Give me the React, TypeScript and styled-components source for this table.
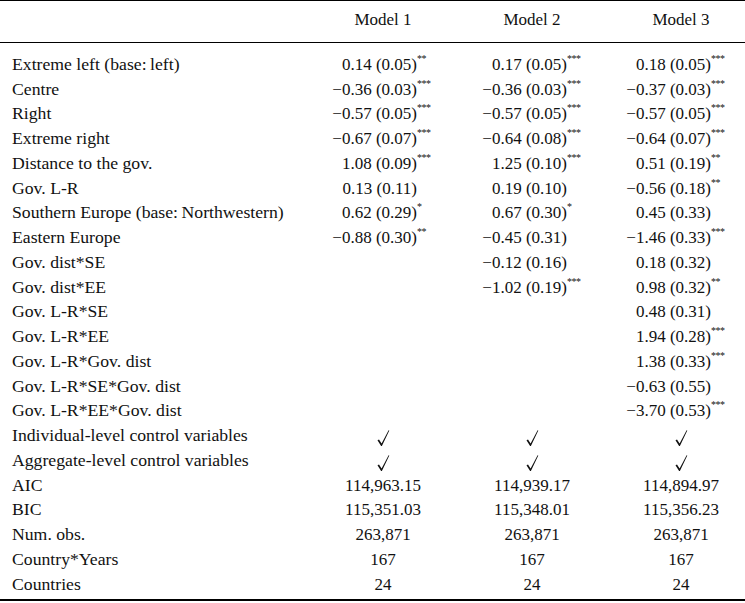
import React from "react";
import styled, { createGlobalStyle } from "styled-components";

const GlobalStyle = createGlobalStyle`
  html, body {
    margin: 0;
    padding: 0;
    background: #ffffff;
  }
  body {
    font-family: "Liberation Serif", "Times New Roman", serif;
    color: #111;
  }
`;

type Coef = [string, string] | null;

const COLS = "282px 120px 120px 120px";

const Table = styled.div`
  width: 745px;
  border-top: 1.5px solid #000;
  border-bottom: 2px solid #000;
  font-size: 17px;
  box-sizing: border-box;
`;

const HeadRow = styled.div`
  display: grid;
  grid-template-columns: ${COLS};
  column-gap: 29px;
  padding: 7px 0 9px 12px;
  line-height: 24.9px;
  border-bottom: 1px solid #000;
`;

const Body = styled.div`
  padding: 9px 0 3px;
`;

const Row = styled.div`
  display: grid;
  grid-template-columns: ${COLS};
  column-gap: 29px;
  align-items: baseline;
  padding-left: 12px;
  height: 24.76px;
  line-height: 24.76px;
  white-space: nowrap;
`;

const Label = styled.div`
  text-align: left;
  font-size: 17.7px;
`;

const Center = styled.div`
  text-align: center;
`;

const CoefCell = styled.div`
  display: flex;
  justify-content: center;
`;

const Num = styled.span`
  width: 90px;
  text-align: right;
`;

const Stars = styled.span<{ $w: number }>`
  width: ${(p) => p.$w}px;
  text-align: left;
  font-size: 10px;
  position: relative;
  top: -6px;
  letter-spacing: -0.5px;
`;

const Check = styled.svg`
  width: 14px;
  height: 18px;
  vertical-align: -6px;
`;

// stars box width per column, sets where the number's right edge lands
const STAR_W = [22, 20, 30];

const coefRows: [string, Coef, Coef, Coef][] = [
  ["Extreme left (base:\u2009left)", ["0.14 (0.05)", "**"], ["0.17 (0.05)", "***"], ["0.18 (0.05)", "***"]],
  ["Centre", ["\u22120.36 (0.03)", "***"], ["\u22120.36 (0.03)", "***"], ["\u22120.37 (0.03)", "***"]],
  ["Right", ["\u22120.57 (0.05)", "***"], ["\u22120.57 (0.05)", "***"], ["\u22120.57 (0.05)", "***"]],
  ["Extreme right", ["\u22120.67 (0.07)", "***"], ["\u22120.64 (0.08)", "***"], ["\u22120.64 (0.07)", "***"]],
  ["Distance to the gov.", ["1.08 (0.09)", "***"], ["1.25 (0.10)", "***"], ["0.51 (0.19)", "**"]],
  ["Gov. L-R", ["0.13 (0.11)", ""], ["0.19 (0.10)", ""], ["\u22120.56 (0.18)", "**"]],
  ["Southern Europe (base:\u2009Northwestern)", ["0.62 (0.29)", "*"], ["0.67 (0.30)", "*"], ["0.45 (0.33)", ""]],
  ["Eastern Europe", ["\u22120.88 (0.30)", "**"], ["\u22120.45 (0.31)", ""], ["\u22121.46 (0.33)", "***"]],
  ["Gov. dist*SE", null, ["\u22120.12 (0.16)", ""], ["0.18 (0.32)", ""]],
  ["Gov. dist*EE", null, ["\u22121.02 (0.19)", "***"], ["0.98 (0.32)", "**"]],
  ["Gov. L-R*SE", null, null, ["0.48 (0.31)", ""]],
  ["Gov. L-R*EE", null, null, ["1.94 (0.28)", "***"]],
  ["Gov. L-R*Gov. dist", null, null, ["1.38 (0.33)", "***"]],
  ["Gov. L-R*SE*Gov. dist", null, null, ["\u22120.63 (0.55)", ""]],
  ["Gov. L-R*EE*Gov. dist", null, null, ["\u22123.70 (0.53)", "***"]],
];

const checkRows = ["Individual-level control variables", "Aggregate-level control variables"];

const statRows: [string, string, string, string][] = [
  ["AIC", "114,963.15", "114,939.17", "114,894.97"],
  ["BIC", "115,351.03", "115,348.01", "115,356.23"],
  ["Num. obs.", "263,871", "263,871", "263,871"],
  ["Country*Years", "167", "167", "167"],
  ["Countries", "24", "24", "24"],
];

const CheckMark = () => (
  <Check viewBox="0 0 14 18">
    <path d="M1.5 11.2 L3 10.4 L5.6 14.6 L12.6 1.2 L13.3 1.6 L5.9 17 L5.1 17 Z" fill="#111" />
  </Check>
);

const App: React.FC = () => {
  return (
    <>
      <GlobalStyle />
      <Table>
        <HeadRow>
          <Label />
          <Center>Model 1</Center>
          <Center>Model 2</Center>
          <Center>Model 3</Center>
        </HeadRow>
        <Body>
          {coefRows.map(([label, ...coefs]) => (
            <Row key={label}>
              <Label>{label}</Label>
              {coefs.map((c, i) =>
                c ? (
                  <CoefCell key={i}>
                    <Num>{c[0]}</Num>
                    <Stars $w={STAR_W[i]}>{c[1]}</Stars>
                  </CoefCell>
                ) : (
                  <div key={i} />
                )
              )}
            </Row>
          ))}
          {checkRows.map((label) => (
            <Row key={label}>
              <Label>{label}</Label>
              <Center><CheckMark /></Center>
              <Center><CheckMark /></Center>
              <Center><CheckMark /></Center>
            </Row>
          ))}
          {statRows.map(([label, a, b, c]) => (
            <Row key={label}>
              <Label>{label}</Label>
              <Center>{a}</Center>
              <Center>{b}</Center>
              <Center>{c}</Center>
            </Row>
          ))}
        </Body>
      </Table>
    </>
  );
};

export default App;
